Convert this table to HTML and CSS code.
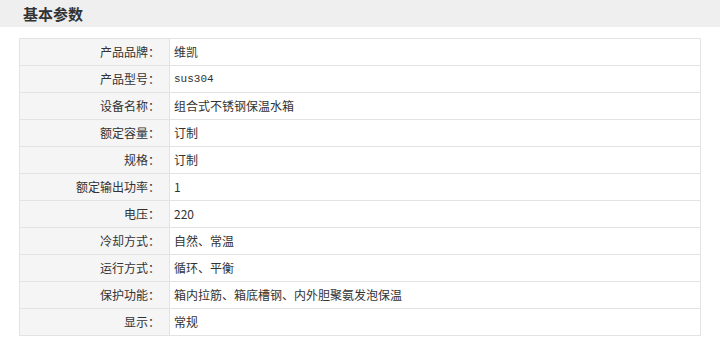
FILE: index.html
```html
<!DOCTYPE html>
<html lang="zh">
<head>
<meta charset="utf-8">
<title>基本参数</title>
<link rel="stylesheet" href="styles.css">
</head>
<body>
<div class="head"><h2 class="title">基本参数</h2></div>
<table class="params">
<tr><th>产品品牌：</th><td>维凯</td></tr>
<tr><th>产品型号：</th><td class="mono">sus304</td></tr>
<tr><th>设备名称：</th><td>组合式不锈钢保温水箱</td></tr>
<tr><th>额定容量：</th><td>订制</td></tr>
<tr><th>规格：</th><td>订制</td></tr>
<tr><th>额定输出功率：</th><td>1</td></tr>
<tr><th>电压：</th><td>220</td></tr>
<tr><th>冷却方式：</th><td>自然、常温</td></tr>
<tr><th>运行方式：</th><td>循环、平衡</td></tr>
<tr><th>保护功能：</th><td>箱内拉筋、箱底槽钢、内外胆聚氨发泡保温</td></tr>
<tr><th>显示：</th><td>常规</td></tr>
</table>
</body>
</html>
```
FILE: styles.css
```css
html, body {
  margin: 0;
  padding: 0;
  background: #fff;
  font-family: "Noto Sans CJK SC", "Liberation Sans", sans-serif;
  color: #333;
}
.head {
  height: 27px;
  background: #efefef;
  display: flex;
  align-items: center;
  padding-left: 23px;
}
.title {
  margin: 0;
  font-size: 15px;
  font-weight: bold;
  color: #333;
  line-height: 1;
}
.params {
  margin: 11px 0 0 19px;
  width: 682px;
  border-collapse: collapse;
  font-size: 12px;
}
.params tr {
  height: 27px;
}
.params th, .params td {
  border: 1px solid #e3e3e3;
  padding: 0;
  line-height: 1;
}
.params th {
  width: 140px;
  background: #f5f5f5;
  font-weight: normal;
  text-align: right;
  padding-right: 9px;
}
.params td {
  text-align: left;
  padding-left: 4px;
}
.params td.mono {
  font-family: "Liberation Mono", monospace;
  font-size: 11px;
}
```
